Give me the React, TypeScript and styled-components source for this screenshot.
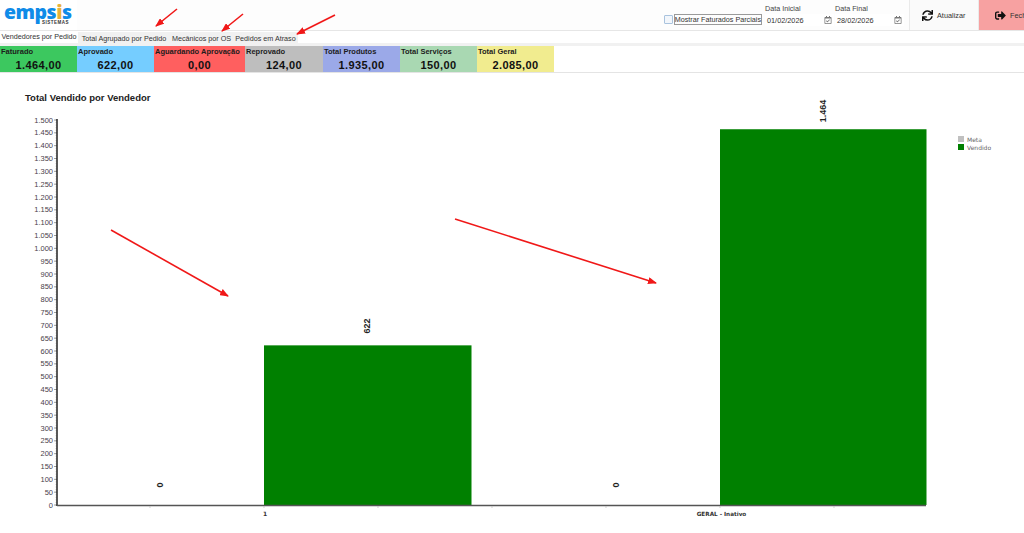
import React from 'react';
import styled, { createGlobalStyle } from 'styled-components';
import { FaSync, FaSignOutAlt, FaRegCalendarCheck } from 'react-icons/fa';

const GlobalStyle = createGlobalStyle`
  html, body {
    margin: 0;
    padding: 0;
    width: 1024px;
    height: 533px;
    overflow: hidden;
    background: #fff;
    font-family: 'Liberation Sans', Arial, sans-serif;
  }
`;

const Page = styled.div`
  position: relative;
  width: 1024px;
  height: 533px;
  overflow: hidden;
`;

const Header = styled.header`
  display: flex;
  align-items: stretch;
  height: 30px;
  background: #fdfdfd;
  border-bottom: 1px solid #e6e6e6;
`;

const Logo = styled.div`
  width: 77px;
  padding: 3px 0 0 4px;
  box-sizing: border-box;
  background: #fff;
  color: #0f8be8;
`;

const LogoName = styled.div`
  font-family: 'Open Sans', sans-serif;
  font-size: 19.5px;
  font-weight: 800;
  letter-spacing: -0.5px;
  line-height: 17px;
`;

const LogoDot = styled.span`
  color: #e8b23a;
`;

const LogoSub = styled.div`
  font-size: 4.5px;
  font-weight: 700;
  line-height: 5px;
  color: #333;
  padding-left: 38px;
  letter-spacing: 0.5px;
`;

const Spacer = styled.div`
  flex: 1;
`;

const PartialCheck = styled.label`
  display: flex;
  align-items: center;
  gap: 1px;
  margin-top: 14px;
  height: 11px;
`;

const CheckBox = styled.span`
  width: 7px;
  height: 7px;
  background: #f2f6fb;
  border: 1px solid #a9c3de;
  border-radius: 1px;
`;

const CheckLabel = styled.span`
  font-size: 7.2px;
  color: #333;
  border: 1px solid #9a9a9a;
  line-height: 9px;
  white-space: nowrap;
`;

const DateGroup = styled.div`
  display: flex;
  gap: 1px;
  margin-left: 3px;
  margin-right: 5px;
`;

const DateField = styled.div`
  display: flex;
  flex-direction: column;
  width: 69px;
`;

const DateLabel = styled.span`
  font-size: 7.2px;
  color: #444;
  height: 14px;
  line-height: 17px;
`;

const DateBox = styled.div`
  display: flex;
  align-items: center;
  justify-content: space-between;
  height: 12px;
  padding: 0 2px;
  background: #fff;
  font-size: 7.3px;
  color: #333;

  svg {
    color: #777;
  }
`;

const ActionButton = styled.div<{ $danger?: boolean }>`
  display: flex;
  align-items: center;
  flex-shrink: 0;
  box-sizing: border-box;
  width: ${({ $danger }) => ($danger ? '46px' : '69px')};
  gap: ${({ $danger }) => ($danger ? '4px' : '4px')};
  padding-left: ${({ $danger }) => ($danger ? '16px' : '12px')};
  background: ${({ $danger }) => ($danger ? '#f7a1a1' : '#fafafa')};
  border-left: 1px solid #eaeaea;
  font-size: 7.3px;
  color: #333;
  white-space: nowrap;
  overflow: hidden;

  svg {
    flex-shrink: 0;
    color: #111;
  }
`;

const TabBar = styled.nav`
  display: flex;
  align-items: flex-end;
  height: 12px;
  background: #fff;
`;

const Tab = styled.div<{ $active?: boolean; $width: number }>`
  width: ${({ $width }) => $width}px;
  height: ${({ $active }) => ($active ? '12px' : '11px')};
  background: ${({ $active }) => ($active ? '#fff' : '#f1f1f1')};
  font-size: 7.2px;
  line-height: ${({ $active }) => ($active ? '11px' : '13px')};
  color: #333;
  text-align: center;
  white-space: nowrap;
`;

const CardStrip = styled.section`
  display: flex;
  padding-top: 3px;
  height: 26px;
  background: linear-gradient(#f1f1f1 3px, #fff 3px);
  border-bottom: 1px solid #e4e4e4;
`;

const Card = styled.div<{ $bg: string; $width: number }>`
  box-sizing: border-box;
  width: ${({ $width }) => $width}px;
  padding: 0 1px;
  background: ${({ $bg }) => $bg};
`;

const CardTitle = styled.div`
  font-size: 7.5px;
  font-weight: 700;
  line-height: 11px;
  color: #1c1c1c;
  white-space: nowrap;
`;

const CardValue = styled.div`
  padding-top: 2px;
  font-size: 11px;
  font-weight: 700;
  line-height: 13px;
  color: #111;
  text-align: center;
  letter-spacing: 0.4px;
`;

const ChartTitle = styled.h2`
  margin: 0;
  padding: 18px 0 0 25px;
  height: 19px;
  font-size: 9.5px;
  font-weight: 700;
  line-height: 13px;
  color: #222;
`;

const ChartSvg = styled.svg`
  display: block;
  overflow: visible;
`;

const ArrowLayer = styled.svg`
  position: absolute;
  inset: 0;
  pointer-events: none;
`;

const CARDS = [
  { title: 'Faturado', value: '1.464,00', bg: '#3cc85f', width: 77 },
  { title: 'Aprovado', value: '622,00', bg: '#75cdff', width: 77 },
  { title: 'Aguardando Aprovação', value: '0,00', bg: '#ff5f5f', width: 91 },
  { title: 'Reprovado', value: '124,00', bg: '#bebebe', width: 78 },
  { title: 'Total Produtos', value: '1.935,00', bg: '#9ba9e8', width: 77 },
  { title: 'Total Serviços', value: '150,00', bg: '#a9d8b2', width: 77 },
  { title: 'Total Geral', value: '2.085,00', bg: '#f1ec8f', width: 77 },
];

const TABS = [
  { label: 'Vendedores por Pedido', width: 78 },
  { label: 'Total Agrupado por Pedido', width: 92 },
  { label: 'Mecânicos por OS', width: 63 },
  { label: 'Pedidos em Atraso', width: 65 },
];

const ARROWS = [
  [177, 9, 156, 26],
  [243, 14, 222, 31],
  [335, 15, 297, 34],
  [111, 230, 228, 296],
  [455, 219, 656, 283],
];

const AXIS_X = 57;
const AXIS_END = 926;
const BASE_Y = 505;
const scaleY = (v: number) => BASE_Y - (v / 1500) * 385;

const formatTick = (v: number) => (v >= 1000 ? `${Math.floor(v / 1000)}.${String(v % 1000).padStart(3, '0')}` : String(v));

const Chart = () => {
  const ticks = Array.from({ length: 31 }, (_, i) => i * 50);
  const minor = Array.from({ length: 151 }, (_, i) => i * 10);
  return (
    <ChartSvg width="1024" height="423" viewBox="0 110 1024 423">
      {minor.map((v) => (
        <line key={v} x1={AXIS_X - 2} x2={AXIS_X} y1={scaleY(v)} y2={scaleY(v)} stroke="#ccc" strokeWidth="0.5" />
      ))}
      {ticks.map((v) => (
        <g key={v}>
          <line x1={AXIS_X - 3} x2={AXIS_X} y1={scaleY(v)} y2={scaleY(v)} stroke="#777" strokeWidth="0.7" />
          <text x={AXIS_X - 4} y={scaleY(v) + 2.5} textAnchor="end" fontSize="7.5" fontFamily="Liberation Sans, sans-serif" fill="#4a3f4a">
            {formatTick(v)}
          </text>
        </g>
      ))}
      <rect x="264" y={scaleY(622)} width="207.5" height={BASE_Y - scaleY(622)} fill="#008000" />
      <rect x="720" y={scaleY(1464)} width="206.5" height={BASE_Y - scaleY(1464)} fill="#008000" />
      <line x1={AXIS_X} x2={AXIS_X} y1="119" y2={BASE_Y + 1} stroke="#222" strokeWidth="1.5" />
      <line x1={AXIS_X} x2={AXIS_END} y1={BASE_Y + 0.5} y2={BASE_Y + 0.5} stroke="#555" strokeWidth="1.5" />
      {[150, 264, 378, 492, 606, 720, 834].map((x) => (
        <line key={x} x1={x} x2={x} y1={BASE_Y + 1} y2={BASE_Y + 3} stroke="#bbb" strokeWidth="0.7" />
      ))}
      <text x="265" y="516" textAnchor="middle" fontSize="6" fontWeight="700" fontFamily="DejaVu Sans, sans-serif" fill="#333">1</text>
      <text x="721.5" y="516" textAnchor="middle" fontSize="5.7" fontWeight="700" fontFamily="DejaVu Sans, sans-serif" fill="#333">GERAL - Inativo</text>
      {[
        { x: 163, y: 485, label: '0' },
        { x: 619, y: 485, label: '0' },
        { x: 370, y: 326, label: '622' },
        { x: 826, y: 111, label: '1.464' },
      ].map(({ x, y, label }) => (
        <text
          key={`${x}-${label}`}
          x={x}
          y={y}
          textAnchor="middle"
          fontSize="9"
          fontFamily="Liberation Sans, sans-serif"
          fontWeight="700"
          fill="#222"
          transform={`rotate(-90 ${x} ${y})`}
        >
          {label}
        </text>
      ))}
      <rect x="958" y="136" width="6" height="6" fill="#c0c0c0" />
      <rect x="958" y="144" width="6" height="6" fill="#008000" />
      <text x="967" y="141.5" fontSize="6" fontFamily="DejaVu Sans, sans-serif" fill="#666">Meta</text>
      <text x="967" y="149.5" fontSize="6" fontFamily="DejaVu Sans, sans-serif" fill="#666">Vendido</text>
    </ChartSvg>
  );
};

const App = () => (
  <Page>
    <GlobalStyle />
    <Header>
      <Logo>
        <LogoName>
          emps<LogoDot>i</LogoDot>s
        </LogoName>
        <LogoSub>SISTEMAS</LogoSub>
      </Logo>
      <Spacer />
      <PartialCheck>
        <CheckBox />
        <CheckLabel>Mostrar Faturados Parciais</CheckLabel>
      </PartialCheck>
      <DateGroup>
        <DateField>
          <DateLabel>Data Inicial</DateLabel>
          <DateBox>
            01/02/2026
            <FaRegCalendarCheck size={8} />
          </DateBox>
        </DateField>
        <DateField>
          <DateLabel>Data Final</DateLabel>
          <DateBox>
            28/02/2026
            <FaRegCalendarCheck size={8} />
          </DateBox>
        </DateField>
      </DateGroup>
      <ActionButton>
        <FaSync size={11} />
        Atualizar
      </ActionButton>
      <ActionButton $danger>
        <FaSignOutAlt size={11} />
        Fechar
      </ActionButton>
    </Header>
    <TabBar>
      {TABS.map((tab, i) => (
        <Tab key={tab.label} $active={i === 0} $width={tab.width}>
          {tab.label}
        </Tab>
      ))}
    </TabBar>
    <CardStrip>
      {CARDS.map((card) => (
        <Card key={card.title} $bg={card.bg} $width={card.width}>
          <CardTitle>{card.title}</CardTitle>
          <CardValue>{card.value}</CardValue>
        </Card>
      ))}
    </CardStrip>
    <ChartTitle>Total Vendido por Vendedor</ChartTitle>
    <Chart />
    <ArrowLayer width="1024" height="533" viewBox="0 0 1024 533">
      <defs>
        <marker id="arrowHead" markerWidth="9" markerHeight="7" refX="8" refY="3.5" orient="auto" markerUnits="userSpaceOnUse">
          <path d="M0 0 L9 3.5 L0 7 Z" fill="#f01818" />
        </marker>
      </defs>
      {ARROWS.map(([x1, y1, x2, y2]) => (
        <line key={x1} x1={x1} y1={y1} x2={x2} y2={y2} stroke="#f01818" strokeWidth="1.6" markerEnd="url(#arrowHead)" />
      ))}
    </ArrowLayer>
  </Page>
);

export default App;
